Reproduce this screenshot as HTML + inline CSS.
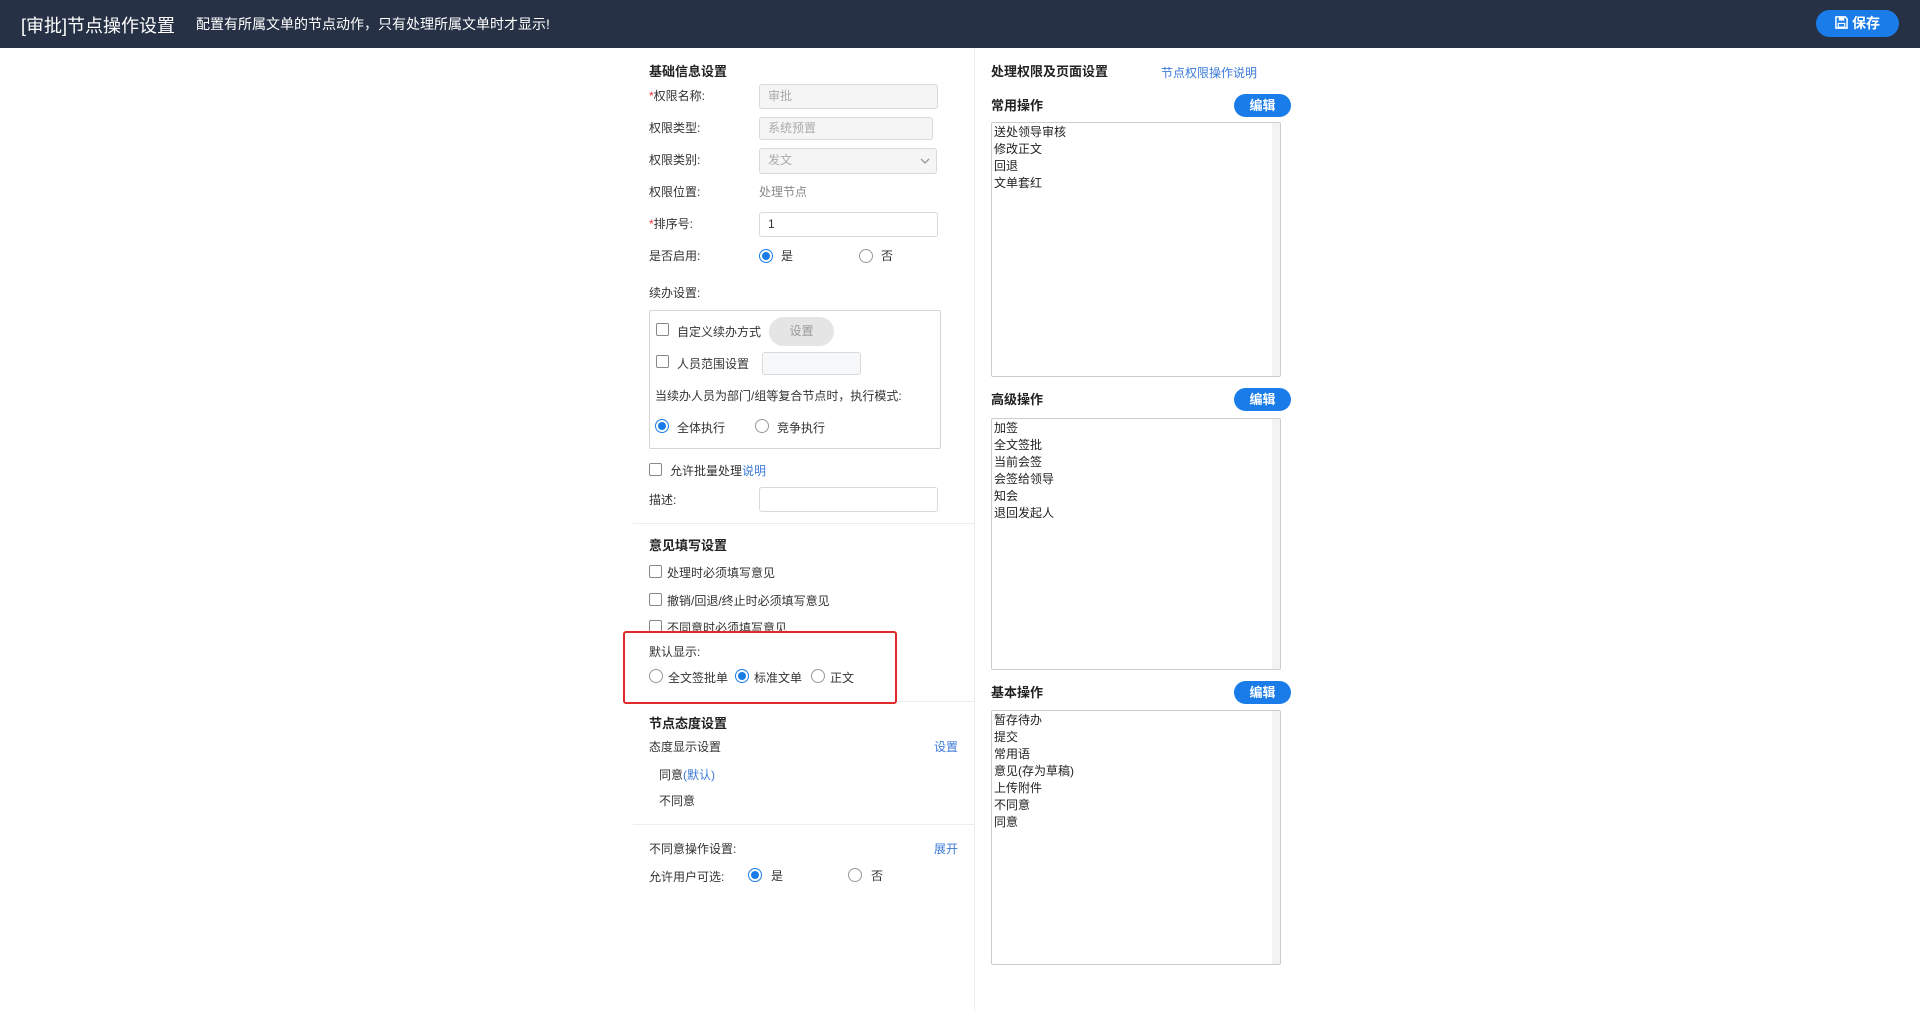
<!DOCTYPE html>
<html><head><meta charset="utf-8"><style>
*{box-sizing:border-box;margin:0;padding:0}
body{width:1920px;height:1011px;background:#fff;font-family:"Liberation Sans","Noto Sans CJK SC",sans-serif;font-size:12px;color:#333;position:relative;overflow:hidden}
.a{position:absolute;white-space:nowrap}
.hd{position:absolute;left:0;top:0;width:1920px;height:48px;background:#263145;color:#fff}
.inp{position:absolute;border:1px solid #d9d9d9;border-radius:3px;background:#fff;padding-left:8px;line-height:23px;color:#333}
.dis{background:#f5f5f5;color:#aaa}
.h{font-weight:bold;font-size:13px;color:#222}
.radio{position:absolute;width:14px;height:14px;border:1px solid #999;border-radius:50%;background:#fff}
.radio.on{border-color:#1a7ce8}
.radio.on:after{content:"";position:absolute;left:2px;top:2px;width:8px;height:8px;border-radius:50%;background:#1a7ce8}
.cb{position:absolute;width:13px;height:13px;border:1px solid #888;border-radius:2px;background:#fff}
.lk{color:#3b7ad9}
.btn{position:absolute;background:#1a7ce8;color:#fff;font-weight:bold;border-radius:12px;text-align:center;font-size:13px}
.ta{position:absolute;border:1px solid #ccc;border-radius:2px;background:#fff;padding:1px 2px;line-height:17px;color:#222}
.ta:after{content:"";position:absolute;right:0;top:0;width:8px;height:100%;background:#f3f3f3}
.ln{position:absolute;height:1px;background:#ececec}
</style></head><body>
<div class="hd">
<div class="a" style="left:21px;top:12px;font-size:18px">[审批]节点操作设置</div>
<div class="a" style="left:196px;top:14px;font-size:14px">配置有所属文单的节点动作，只有处理所属文单时才显示!</div>
<div class="a" style="left:1816px;top:10px;width:83px;height:27px;background:#1a7ce8;border-radius:14px;font-size:14px;font-weight:bold;line-height:27px;text-align:center">
<svg width="13" height="13" viewBox="0 0 14 14" style="vertical-align:-1px;margin-right:4px"><path d="M1 1h10l2 2v10H1z" fill="none" stroke="#fff" stroke-width="1.6"/><rect x="4" y="1" width="6" height="4" fill="#fff"/><rect x="3.5" y="8" width="7" height="4" fill="none" stroke="#fff" stroke-width="1.3"/></svg>保存</div>
</div>
<div style="position:absolute;left:974px;top:48px;width:1px;height:963px;background:#ececec"></div>

<div class="a h" style="left:649px;top:61px">基础信息设置</div>
<div class="a" style="left:649px;top:87px"><span style="color:#e33">*</span>权限名称:</div>
<div class="inp dis" style="left:759px;top:84px;width:179px;height:25px">审批</div>
<div class="a" style="left:649px;top:119px">权限类型:</div>
<div class="inp dis" style="left:759px;top:117px;width:174px;height:23px;line-height:21px">系统预置</div>
<div class="a" style="left:649px;top:151px">权限类别:</div>
<div class="inp dis" style="left:759px;top:148px;width:178px;height:26px">发文<svg style="position:absolute;right:6px;top:9px" width="10" height="7" viewBox="0 0 10 7"><path d="M1 1l4 4 4-4" fill="none" stroke="#999" stroke-width="1.3"/></svg></div>
<div class="a" style="left:649px;top:183px">权限位置:</div>
<div class="a" style="left:759px;top:183px;color:#888">处理节点</div>
<div class="a" style="left:649px;top:215px"><span style="color:#e33">*</span>排序号:</div>
<div class="inp" style="left:759px;top:212px;width:179px;height:25px">1</div>
<div class="a" style="left:649px;top:247px">是否启用:</div>
<div class="radio on" style="left:759px;top:249px"></div><div class="a" style="left:781px;top:247px">是</div>
<div class="radio" style="left:859px;top:249px"></div><div class="a" style="left:881px;top:247px">否</div>
<div class="a" style="left:649px;top:284px">续办设置:</div>
<div style="position:absolute;left:649px;top:310px;width:292px;height:139px;border:1px solid #d5d5d5;border-radius:2px"></div>
<div class="cb" style="left:656px;top:323px"></div><div class="a" style="left:677px;top:323px">自定义续办方式</div>
<div class="a" style="left:769px;top:317px;width:65px;height:29px;border-radius:15px;background:#e5e5e5;color:#999;text-align:center;line-height:29px">设置</div>
<div class="cb" style="left:656px;top:355px"></div><div class="a" style="left:677px;top:355px">人员范围设置</div>
<div class="inp dis" style="left:762px;top:352px;width:99px;height:23px;background:#f7f8fa"></div>
<div class="a" style="left:655px;top:387px">当续办人员为部门/组等复合节点时，执行模式:</div>
<div class="radio on" style="left:655px;top:419px"></div><div class="a" style="left:677px;top:419px">全体执行</div>
<div class="radio" style="left:755px;top:419px"></div><div class="a" style="left:777px;top:419px">竞争执行</div>
<div class="cb" style="left:649px;top:463px"></div><div class="a" style="left:670px;top:462px">允许批量处理<span class="lk">说明</span></div>
<div class="a" style="left:649px;top:491px">描述:</div>
<div class="inp" style="left:759px;top:487px;width:179px;height:25px"></div>
<div class="ln" style="left:633px;top:523px;width:341px"></div>

<div class="a h" style="left:649px;top:535px">意见填写设置</div>
<div class="cb" style="left:649px;top:565px"></div><div class="a" style="left:667px;top:564px">处理时必须填写意见</div>
<div class="cb" style="left:649px;top:593px"></div><div class="a" style="left:667px;top:592px">撤销/回退/终止时必须填写意见</div>
<div class="cb" style="left:649px;top:620px"></div><div class="a" style="left:667px;top:619px">不同意时必须填写意见</div>
<div style="position:absolute;left:623px;top:631px;width:274px;height:73px;border:2px solid #e02a2a;border-radius:3px;background:#fff"></div>
<div class="a" style="left:649px;top:643px">默认显示:</div>
<div class="radio" style="left:649px;top:669px"></div><div class="a" style="left:668px;top:669px">全文签批单</div>
<div class="radio on" style="left:735px;top:669px"></div><div class="a" style="left:754px;top:669px">标准文单</div>
<div class="radio" style="left:811px;top:669px"></div><div class="a" style="left:830px;top:669px">正文</div>
<div class="ln" style="left:897px;top:701px;width:77px"></div>
<div class="a h" style="left:649px;top:713px">节点态度设置</div>
<div class="a" style="left:649px;top:738px">态度显示设置</div><div class="a lk" style="left:934px;top:738px">设置</div>
<div class="a" style="left:659px;top:766px">同意<span class="lk">(默认)</span></div>
<div class="a" style="left:659px;top:792px">不同意</div>
<div class="ln" style="left:633px;top:824px;width:341px"></div>
<div class="a" style="left:649px;top:840px">不同意操作设置:</div><div class="a lk" style="left:934px;top:840px">展开</div>
<div class="a" style="left:649px;top:868px">允许用户可选:</div>
<div class="radio on" style="left:748px;top:868px"></div><div class="a" style="left:771px;top:867px">是</div>
<div class="radio" style="left:848px;top:868px"></div><div class="a" style="left:871px;top:867px">否</div>

<div class="a h" style="left:991px;top:61px">处理权限及页面设置</div>
<div class="a lk" style="left:1161px;top:64px;font-size:12px">节点权限操作说明</div>
<div class="a h" style="left:991px;top:95px">常用操作</div>
<div class="btn" style="left:1234px;top:94px;width:57px;height:23px;line-height:23px">编辑</div>
<div class="ta" style="left:991px;top:122px;width:290px;height:255px">送处领导审核<br>修改正文<br>回退<br>文单套红</div>
<div class="a h" style="left:991px;top:389px">高级操作</div>
<div class="btn" style="left:1234px;top:388px;width:57px;height:23px;line-height:23px">编辑</div>
<div class="ta" style="left:991px;top:418px;width:290px;height:252px">加签<br>全文签批<br>当前会签<br>会签给领导<br>知会<br>退回发起人</div>
<div class="a h" style="left:991px;top:682px">基本操作</div>
<div class="btn" style="left:1234px;top:681px;width:57px;height:23px;line-height:23px">编辑</div>
<div class="ta" style="left:991px;top:710px;width:290px;height:255px">暂存待办<br>提交<br>常用语<br>意见(存为草稿)<br>上传附件<br>不同意<br>同意</div>
</body></html>
